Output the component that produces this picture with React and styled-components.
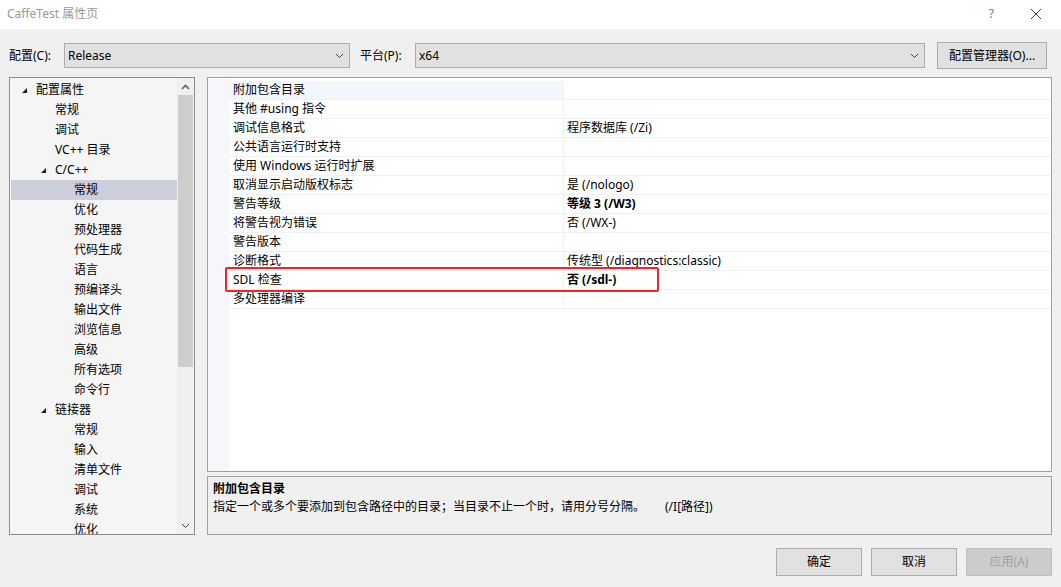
import React from 'react';
import styled, { createGlobalStyle } from 'styled-components';

const GlobalStyle = createGlobalStyle`
  html, body {
    margin: 0;
    padding: 0;
    background: #f0f0f0;
  }
  body {
    font-family: "Noto Sans", "Noto Sans CJK SC", sans-serif;
    font-size: 12px;
    color: #000;
  }
`;

const treeItems = [
  { label: '配置属性', level: 0, open: true },
  { label: '常规', level: 1 },
  { label: '调试', level: 1 },
  { label: 'VC++ 目录', level: 1 },
  { label: 'C/C++', level: 1, open: true },
  { label: '常规', level: 2, selected: true },
  { label: '优化', level: 2 },
  { label: '预处理器', level: 2 },
  { label: '代码生成', level: 2 },
  { label: '语言', level: 2 },
  { label: '预编译头', level: 2 },
  { label: '输出文件', level: 2 },
  { label: '浏览信息', level: 2 },
  { label: '高级', level: 2 },
  { label: '所有选项', level: 2 },
  { label: '命令行', level: 2 },
  { label: '链接器', level: 1, open: true },
  { label: '常规', level: 2 },
  { label: '输入', level: 2 },
  { label: '清单文件', level: 2 },
  { label: '调试', level: 2 },
  { label: '系统', level: 2 },
  { label: '优化', level: 2 },
];

const props = [
  { name: '附加包含目录', value: '', focus: true },
  { name: '其他 #using 指令', value: '' },
  { name: '调试信息格式', value: '程序数据库 (/Zi)' },
  { name: '公共语言运行时支持', value: '' },
  { name: '使用 Windows 运行时扩展', value: '' },
  { name: '取消显示启动版权标志', value: '是 (/nologo)' },
  { name: '警告等级', value: '等级 3 (/W3)', bold: true },
  { name: '将警告视为错误', value: '否 (/WX-)' },
  { name: '警告版本', value: '' },
  { name: '诊断格式', value: '传统型 (/diagnostics:classic)' },
  { name: 'SDL 检查', value: '否 (/sdl-)', bold: true },
  { name: '多处理器编译', value: '' },
];

const Chevron = ({ up }) => (
  <svg width="9" height="6" viewBox="0 0 9 6">
    <polyline
      points={up ? '1,5 4.5,1.5 8,5' : '1,1 4.5,4.5 8,1'}
      fill="none"
      stroke={up ? '#606060' : '#404040'}
      strokeWidth={up ? 1.6 : 1}
    />
  </svg>
);

const Expander = () => (
  <svg width="6" height="6" viewBox="0 0 6 6">
    <polygon points="6,0 6,5 1,5" fill="#1e1e1e" />
  </svg>
);

export default function App() {
  return (
    <Window>
      <GlobalStyle />
      <TitleBar>
        <Title>CaffeTest 属性页</Title>
        <TitleButtons>
          <HelpMark>?</HelpMark>
          <svg width="12" height="12" viewBox="0 0 12 12">
            <path d="M1 1 L11 11 M11 1 L1 11" stroke="#444" strokeWidth="1" />
          </svg>
        </TitleButtons>
      </TitleBar>

      <Body>
        <ConfigRow>
          <FieldLabel $width={55}>配置(C):</FieldLabel>
          <Combo $width={286}>
            <span>Release</span>
            <Chevron />
          </Combo>
          <FieldLabel $width={55} $gap={10}>平台(P):</FieldLabel>
          <Combo $width={510}>
            <span>x64</span>
            <Chevron />
          </Combo>
          <Button $width={110} $gap={12} $height={27}>配置管理器(O)...</Button>
        </ConfigRow>

        <Main>
          <Tree>
            <TreeList>
              {treeItems.map((it, i) => (
                <TreeRow key={i} $selected={it.selected} $level={it.level}>
                  <ExpanderSlot>{it.open && <Expander />}</ExpanderSlot>
                  {it.label}
                </TreeRow>
              ))}
            </TreeList>
            <ScrollBar>
              <ScrollArrow><Chevron up /></ScrollArrow>
              <ScrollTrack>
                <Thumb />
              </ScrollTrack>
              <ScrollArrow><Chevron /></ScrollArrow>
            </ScrollBar>
          </Tree>

          <RightColumn>
            <Grid>
              <Gutter />
              <GridRows>
                {props.map((p, i) => (
                  <PropRow key={i}>
                    <NameCell $focus={p.focus}>{p.name}</NameCell>
                    <ValueCell $bold={p.bold}>{p.value}</ValueCell>
                  </PropRow>
                ))}
                <Highlight />
              </GridRows>
            </Grid>
            <Description>
              <DescTitle>附加包含目录</DescTitle>
              <DescText>
                指定一个或多个要添加到包含路径中的目录；当目录不止一个时，请用分号分隔。
                <Switch>(/I[路径])</Switch>
              </DescText>
            </Description>
          </RightColumn>
        </Main>

        <Footer>
          <Button $width={86} $height={28}>确定</Button>
          <Button $width={86} $height={28} $gap={9}>取消</Button>
          <Button $width={86} $height={28} $gap={9} $disabled>应用(A)</Button>
        </Footer>
      </Body>
    </Window>
  );
}

const Window = styled.div`
  width: 1061px;
  height: 587px;
  display: flex;
  flex-direction: column;
  background: #f0f0f0;
  overflow: hidden;
`;

const TitleBar = styled.div`
  height: 29px;
  background: #fff;
  display: flex;
  align-items: center;
  justify-content: space-between;
  padding: 0 0 0 7px;
`;

const Title = styled.div`
  color: #999;
  font-size: 12px;
  line-height: 16px;
  margin-top: -2px;
`;

const TitleButtons = styled.div`
  display: flex;
  align-items: center;
  gap: 36px;
  padding-right: 19px;
  margin-top: -2px;
`;

const HelpMark = styled.span`
  color: #777;
  font-size: 12px;
  line-height: 14px;
`;

const Body = styled.div`
  flex: 1;
  display: flex;
  flex-direction: column;
  padding: 13px 9px 0 9px;
`;

const ConfigRow = styled.div`
  display: flex;
  align-items: center;
  height: 27px;
`;

const FieldLabel = styled.div`
  width: ${p => p.$width}px;
  margin-left: ${p => p.$gap || 0}px;
  line-height: 16px;
  white-space: nowrap;
`;

const Combo = styled.div`
  width: ${p => p.$width}px;
  height: 25px;
  box-sizing: border-box;
  border: 1px solid #adadad;
  background: #e1e1e1;
  display: flex;
  align-items: center;
  justify-content: space-between;
  padding: 0 5px 0 3px;
  line-height: 16px;
`;

const Button = styled.div`
  width: ${p => p.$width}px;
  height: ${p => p.$height}px;
  margin-left: ${p => p.$gap || 0}px;
  box-sizing: border-box;
  border: 1px solid ${p => (p.$disabled ? '#bfbfbf' : '#adadad')};
  background: ${p => (p.$disabled ? '#cccccc' : '#e1e1e1')};
  color: ${p => (p.$disabled ? '#a0a0a0' : '#000')};
  display: flex;
  align-items: center;
  justify-content: center;
  line-height: 16px;
  white-space: nowrap;
`;

const Main = styled.div`
  display: flex;
  margin-top: 8px;
  height: 458px;
`;

const Tree = styled.div`
  width: 186px;
  box-sizing: border-box;
  border: 1px solid #8c8c8c;
  background: #f5f5f5;
  display: flex;
  overflow: hidden;
`;

const TreeList = styled.div`
  flex: 1;
  padding: 2px 0 0 1px;
  overflow: hidden;
`;

const TreeRow = styled.div`
  height: 20px;
  display: flex;
  align-items: center;
  padding-left: ${p => 10 + p.$level * 19}px;
  background: ${p => (p.$selected ? '#cccedb' : 'transparent')};
  line-height: 16px;
  white-space: nowrap;
`;

const ExpanderSlot = styled.span`
  width: 15px;
  display: flex;
  align-items: center;
  margin-top: 2px;
`;

const ScrollBar = styled.div`
  width: 17px;
  display: flex;
  flex-direction: column;
  background: #f0f0f0;
`;

const ScrollArrow = styled.div`
  height: 17px;
  display: flex;
  align-items: center;
  justify-content: center;
`;

const ScrollTrack = styled.div`
  flex: 1;
  padding: 0 1px;
`;

const Thumb = styled.div`
  height: 272px;
  background: #cdcdcd;
`;

const RightColumn = styled.div`
  flex: 1;
  margin-left: 12px;
  display: flex;
  flex-direction: column;
  gap: 4px;
`;

const Grid = styled.div`
  height: 395px;
  box-sizing: border-box;
  border: 1px solid #a0a0a0;
  background: #fff;
  display: flex;
  padding-top: 3px;
`;

const Gutter = styled.div`
  width: 21px;
  margin-top: -2px;
  background: #f5f7fb;
`;

const GridRows = styled.div`
  flex: 1;
  position: relative;
`;

const PropRow = styled.div`
  display: grid;
  grid-template-columns: 335px 1fr;
  height: 19px;
  box-sizing: border-box;
  border-bottom: 1px solid #eef1f6;
`;

const NameCell = styled.div`
  padding-left: 4px;
  background: ${p => (p.$focus ? '#f3f6fb' : '#fff')};
  border-right: 1px solid #eef1f6;
  line-height: 18px;
  white-space: nowrap;
`;

const ValueCell = styled.div`
  padding-left: 3px;
  font-weight: ${p => (p.$bold ? 700 : 400)};
  line-height: 18px;
  white-space: nowrap;
`;

const Highlight = styled.div`
  position: absolute;
  left: -4px;
  top: 186px;
  width: 434px;
  height: 25px;
  box-sizing: border-box;
  border: 2px solid #f52424;
  border-radius: 2px;
`;

const Description = styled.div`
  flex: 1;
  box-sizing: border-box;
  border: 1px solid #a0a0a0;
  background: #f0f0f0;
  padding: 3px 5px;
`;

const DescTitle = styled.div`
  font-weight: 700;
  line-height: 18px;
`;

const DescText = styled.div`
  line-height: 18px;
  white-space: nowrap;
`;

const Switch = styled.span`
  margin-left: 20px;
`;

const Footer = styled.div`
  display: flex;
  justify-content: flex-end;
  margin-top: 13px;
`;
